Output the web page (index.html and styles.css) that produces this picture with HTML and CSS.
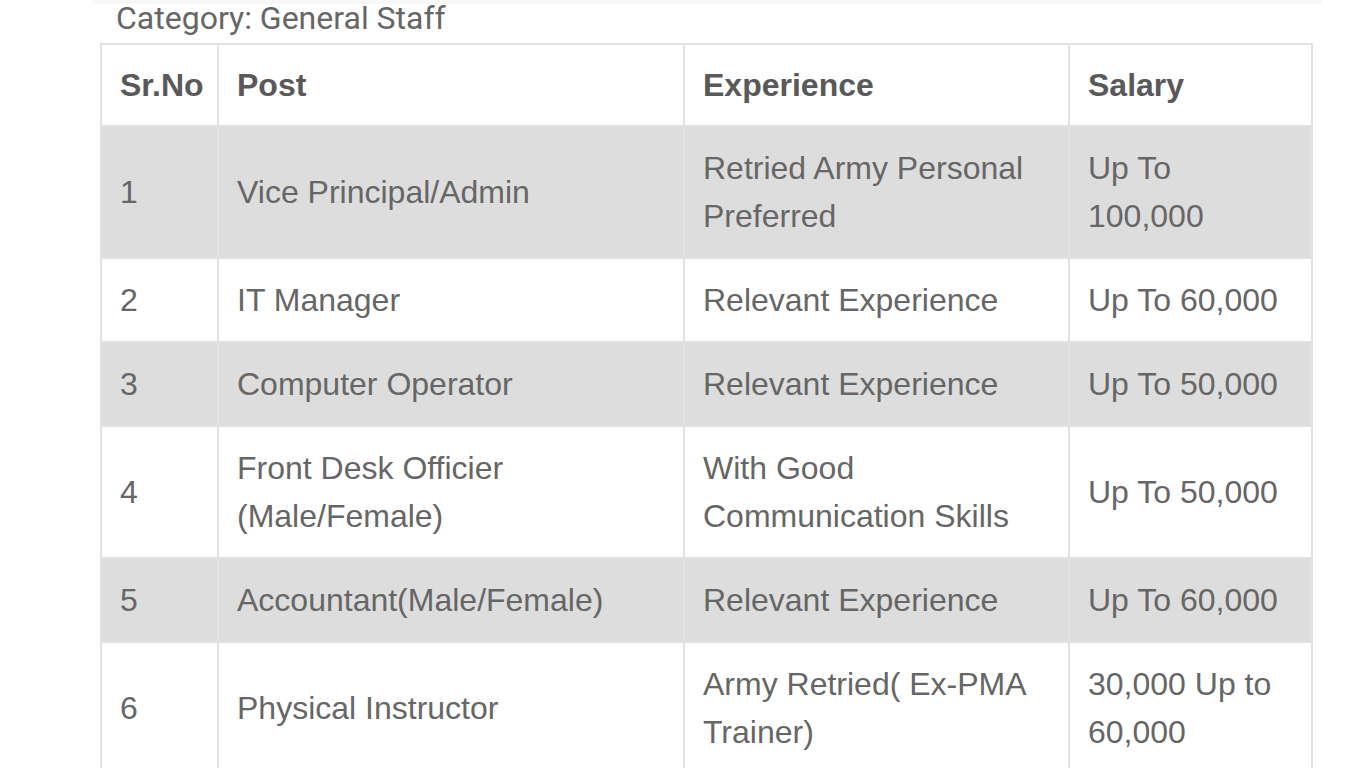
FILE: index.html
```html
<!DOCTYPE html>
<html lang="en">
<head>
<meta charset="utf-8">
<title>Category: General Staff</title>
<link rel="stylesheet" href="styles.css">
</head>
<body>
<div class="page">
  <div class="category">Category: General Staff</div>
  <table class="jobs">
    <colgroup>
      <col class="c-no">
      <col class="c-post">
      <col class="c-exp">
      <col class="c-sal">
    </colgroup>
    <thead>
      <tr><th>Sr.No</th><th>Post</th><th>Experience</th><th>Salary</th></tr>
    </thead>
    <tbody>
      <tr class="alt"><td>1</td><td>Vice Principal/Admin</td><td>Retried Army Personal Preferred</td><td>Up To 100,000</td></tr>
      <tr><td>2</td><td>IT Manager</td><td>Relevant Experience</td><td>Up To 60,000</td></tr>
      <tr class="alt"><td>3</td><td>Computer Operator</td><td>Relevant Experience</td><td>Up To 50,000</td></tr>
      <tr><td>4</td><td>Front Desk Officier (Male/Female)</td><td>With Good Communication Skills</td><td>Up To 50,000</td></tr>
      <tr class="alt"><td>5</td><td>Accountant(Male/Female)</td><td>Relevant Experience</td><td>Up To 60,000</td></tr>
      <tr><td>6</td><td>Physical Instructor</td><td>Army Retried( Ex-PMA Trainer)</td><td>30,000 Up to 60,000</td></tr>
    </tbody>
  </table>
</div>
</body>
</html>
```
FILE: styles.css
```css
html, body {
  margin: 0;
  padding: 0;
  background: #ffffff;
}

.page {
  margin-left: 92px;
  width: 1230px;
  padding-left: 8px;
  box-sizing: border-box;
  background: linear-gradient(#f8f8f8 0, #f8f8f8 4px, transparent 4px);
}

.category {
  font-family: Roboto, "Liberation Sans", sans-serif;
  font-size: 32px;
  line-height: 36px;
  color: #666666;
  padding-left: 16px;
}

.jobs {
  margin-top: 7px;
  border-collapse: collapse;
  table-layout: fixed;
  width: 1211px;
  font-family: "Liberation Sans", Arial, sans-serif;
  font-size: 32px;
  line-height: 48px;
  color: #666666;
  border: 2px solid #e2e2e2;
}

.c-no { width: 117px; }
.c-post { width: 466px; }
.c-exp { width: 385px; }
.c-sal { width: 243px; }

.jobs th,
.jobs td {
  border: 2px solid #e2e2e2;
  padding: 17px 17px 17px 18px;
  text-align: left;
  vertical-align: middle;
}

.jobs th {
  padding-top: 16px;
  padding-bottom: 16px;
  font-weight: bold;
  color: #595959;
}

.jobs tr.alt td {
  background: #dddddd;
}
```
